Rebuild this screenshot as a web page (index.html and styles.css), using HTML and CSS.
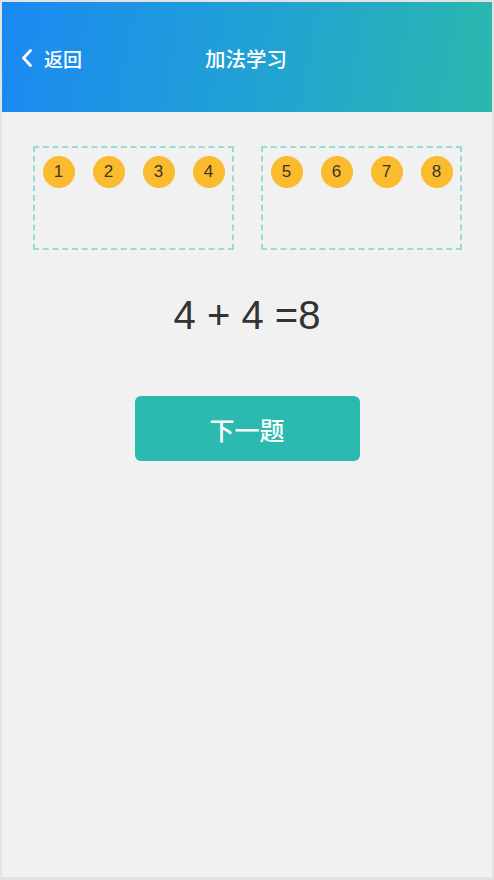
FILE: index.html
```html
<!DOCTYPE html>
<html lang="zh">
<head>
<meta charset="utf-8">
<title>加法学习</title>
<link rel="stylesheet" href="styles.css">
</head>
<body>
<div class="screen">
  <header class="topbar">
    <div class="back">
      <svg class="chev" width="12" height="20" viewBox="0 0 12 20"><path d="M9.5 2.5 L2.5 10 L9.5 17.5" fill="none" stroke="#fff" stroke-width="2.8" stroke-linecap="round" stroke-linejoin="round"/></svg>
      <span>返回</span>
    </div>
    <h1 class="title">加法学习</h1>
  </header>
  <main class="content">
    <div class="groups">
      <div class="group">
        <span class="ball">1</span><span class="ball">2</span><span class="ball">3</span><span class="ball">4</span>
      </div>
      <div class="group">
        <span class="ball">5</span><span class="ball">6</span><span class="ball">7</span><span class="ball">8</span>
      </div>
    </div>
    <div class="equation">4 + 4 =8</div>
    <button class="next">下一题</button>
  </main>
</div>
</body>
</html>
```
FILE: styles.css
```css
html, body {
  margin: 0;
  padding: 0;
}
body {
  background: #e9e9e9;
  font-family: "Noto Sans CJK SC", "Liberation Sans", sans-serif;
}
.screen {
  box-sizing: border-box;
  width: 494px;
  height: 880px;
  border: 2px solid #e3e3e3;
  border-bottom-width: 3px;
  background: #f1f1f1;
  display: flex;
  flex-direction: column;
}
.topbar {
  position: relative;
  height: 110px;
  flex: none;
  background: linear-gradient(100deg, #1b89f3 0%, #21a3d2 55%, #2bb8ad 100%);
  display: flex;
  align-items: center;
  color: #fff;
}
.back {
  display: flex;
  align-items: center;
  gap: 11px;
  padding-left: 19px;
  font-size: 19px;
  font-weight: 500;
  margin-top: 2px;
}
.chev {
  display: block;
}
.title {
  position: absolute;
  left: 0;
  right: 0;
  top: 0;
  bottom: 0;
  margin: 0;
  display: flex;
  align-items: center;
  justify-content: center;
  font-size: 20.5px;
  font-weight: 500;
  padding-right: 2px;
  padding-top: 2px;
}
.content {
  display: flex;
  flex-direction: column;
  align-items: center;
}
.groups {
  display: flex;
  gap: 27px;
  margin-top: 34px;
}
.group {
  box-sizing: border-box;
  width: 201px;
  height: 104px;
  border: 2px dashed #97dcd6;
  display: flex;
  align-items: flex-start;
  gap: 18px;
  padding: 8px 0 0 8px;
}
.ball {
  width: 32px;
  height: 32px;
  border-radius: 50%;
  background: #fbbb2e;
  color: #3a3320;
  font-family: "Liberation Sans", Arial, sans-serif;
  font-size: 17px;
  display: flex;
  align-items: center;
  justify-content: center;
}
.equation {
  margin-top: 42px;
  font-family: "Liberation Sans", Arial, sans-serif;
  font-size: 40px;
  color: #333;
  line-height: 46px;
}
.next {
  margin-top: 58px;
  width: 225px;
  height: 65px;
  border: none;
  border-radius: 6px;
  background: #2bb9b0;
  color: #fff;
  font-family: "Noto Sans CJK SC", sans-serif;
  font-size: 25px;
  font-weight: 500;
  letter-spacing: 0;
}
```
